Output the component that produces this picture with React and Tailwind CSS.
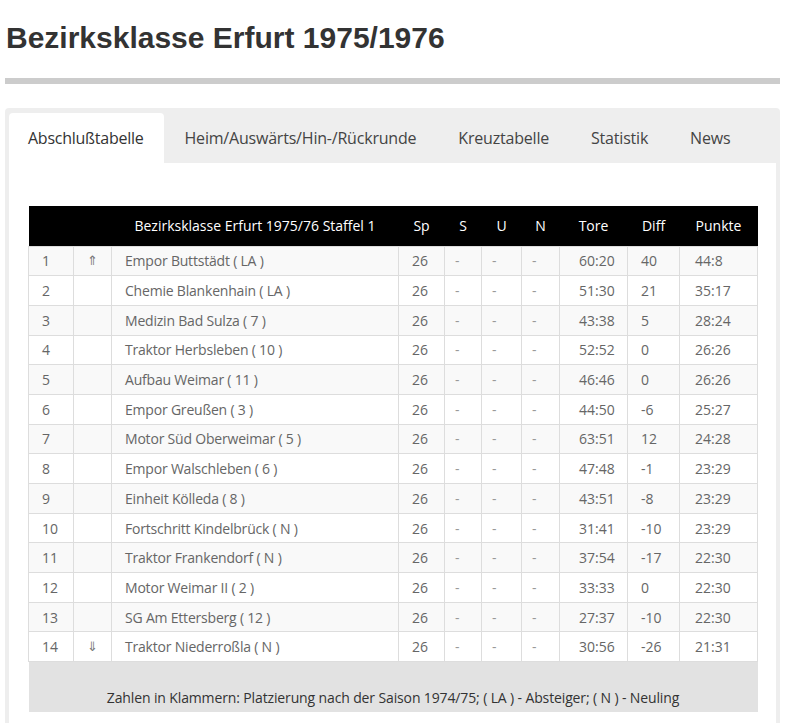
import React from "react";

const rows = [
  ["1", "⇑", "Empor Buttstädt ( LA )", "60:20", "40", "44:8"],
  ["2", "", "Chemie Blankenhain ( LA )", "51:30", "21", "35:17"],
  ["3", "", "Medizin Bad Sulza ( 7 )", "43:38", "5", "28:24"],
  ["4", "", "Traktor Herbsleben ( 10 )", "52:52", "0", "26:26"],
  ["5", "", "Aufbau Weimar ( 11 )", "46:46", "0", "26:26"],
  ["6", "", "Empor Greußen ( 3 )", "44:50", "-6", "25:27"],
  ["7", "", "Motor Süd Oberweimar ( 5 )", "63:51", "12", "24:28"],
  ["8", "", "Empor Walschleben ( 6 )", "47:48", "-1", "23:29"],
  ["9", "", "Einheit Kölleda ( 8 )", "43:51", "-8", "23:29"],
  ["10", "", "Fortschritt Kindelbrück ( N )", "31:41", "-10", "23:29"],
  ["11", "", "Traktor Frankendorf ( N )", "37:54", "-17", "22:30"],
  ["12", "", "Motor Weimar II ( 2 )", "33:33", "0", "22:30"],
  ["13", "", "SG Am Ettersberg ( 12 )", "27:37", "-10", "22:30"],
  ["14", "⇓", "Traktor Niederroßla ( N )", "30:56", "-26", "21:31"],
];

const tabs = ["Abschlußtabelle", "Heim/Auswärts/Hin-/Rückrunde", "Kreuztabelle", "Statistik", "News"];

export default function App() {
  return (
    <div className="bg-white min-h-[723px] overflow-hidden">
      <div className="pl-[5px] pr-[9px]">
        <h1 className="pt-[20px] pl-[1px] h-[78px] text-[30px] font-bold text-[#333] leading-[36px] [font-family:'Liberation_Sans',Arial,sans-serif]">
          Bezirksklasse Erfurt 1975/1976
        </h1>
        <div className="h-[6px] bg-[#cccccc]" />
        <div className="mt-[24px] bg-[#eeeeee] rounded-t-[4px] pt-[5px] px-[4px] [font-family:'Open_Sans',sans-serif]">
          <div className="flex h-[50px]">
            {tabs.map((t, i) => (
              <div
                key={t}
                className={
                  i === 0
                    ? "flex items-center pl-[19px] pr-[20px] bg-white rounded-t-[4px] text-[16px] text-[#333] tracking-[-0.25px]"
                    : "flex items-center px-[21px] text-[16px] text-[#444] tracking-[-0.2px]"
                }
              >
                {t}
              </div>
            ))}
          </div>
          <div className="bg-white pt-[43px] px-[19px] pr-[18px] pb-[20px]">
            <table className="w-full table-fixed border-collapse text-[14px]">
              <colgroup>
                <col className="w-[45px]" />
                <col className="w-[38px]" />
                <col className="w-[287px]" />
                <col className="w-[46px]" />
                <col className="w-[37px]" />
                <col className="w-[40px]" />
                <col className="w-[38px]" />
                <col className="w-[68px]" />
                <col className="w-[52px]" />
                <col />
              </colgroup>
              <thead>
                <tr className="bg-black text-white h-[40px] text-[14px]">
                  <th className="font-normal"></th>
                  <th className="font-normal"></th>
                  <th className="font-normal text-center">Bezirksklasse Erfurt 1975/76 Staffel 1</th>
                  <th className="font-normal text-center">Sp</th>
                  <th className="font-normal text-center">S</th>
                  <th className="font-normal text-center">U</th>
                  <th className="font-normal text-center">N</th>
                  <th className="font-normal text-center">Tore</th>
                  <th className="font-normal text-center">Diff</th>
                  <th className="font-normal text-center">Punkte</th>
                </tr>
              </thead>
              <tbody className="text-[#666]">
                {rows.map((r, i) => (
                  <tr key={r[0]} className={(i % 2 === 0 ? "bg-[#f9f9f9]" : "bg-white") + " h-[29.7px]"}>
                    <td className="border border-[#dddddd] pl-[13px]">{r[0]}</td>
                    <td className="border border-[#dddddd] pl-[13px] text-[13px] text-[#777] [font-family:'DejaVu_Sans',sans-serif]">{r[1]}</td>
                    <td className="border border-[#dddddd] pl-[13px] tracking-[-0.2px]">{r[2]}</td>
                    <td className="border border-[#dddddd] pl-[13px]">26</td>
                    <td className="border border-[#dddddd] pl-[10px] text-[#999]">-</td>
                    <td className="border border-[#dddddd] pl-[10px] text-[#999]">-</td>
                    <td className="border border-[#dddddd] pl-[10px] text-[#999]">-</td>
                    <td className="border border-[#dddddd] pl-[19px]">{r[3]}</td>
                    <td className="border border-[#dddddd] pl-[13px]">{r[4]}</td>
                    <td className="border border-[#dddddd] pl-[15px]">{r[5]}</td>
                  </tr>
                ))}
                <tr className="bg-[#e2e2e2]">
                  <td colSpan={10} className="h-[50px] text-center align-bottom pb-[4px] text-[#333] tracking-[-0.13px]">
                    Zahlen in Klammern: Platzierung nach der Saison 1974/75; ( LA ) - Absteiger; ( N ) - Neuling
                  </td>
                </tr>
              </tbody>
            </table>
          </div>
        </div>
      </div>
    </div>
  );
}
